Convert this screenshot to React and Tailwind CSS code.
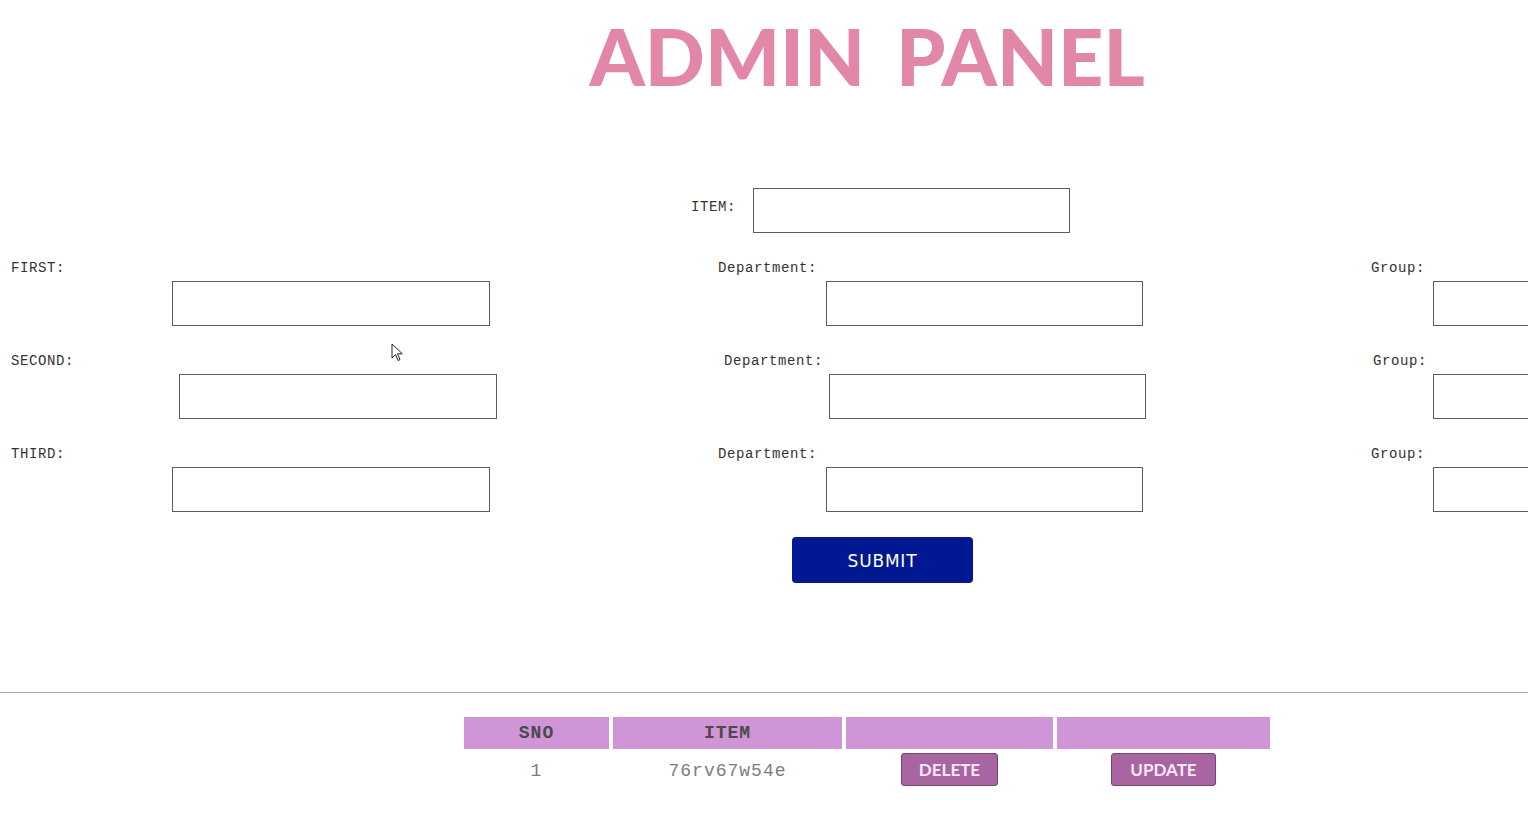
import React, { useState } from "react";

const labelCls =
  "block font-['Liberation_Mono',monospace] text-[14px] leading-4 tracking-[0.6px] text-[#333]";
const inputCls =
  "block mt-[5px] h-[45px] border border-[#5c5c5c] bg-white outline-none px-2";

const rows = [
  { name: "FIRST", first: [11, 172], dept: [11, 119], group: [11, 73] },
  { name: "SECOND", first: [11, 179], dept: [17, 122], group: [13, 73] },
  { name: "THIRD", first: [11, 172], dept: [11, 119], group: [11, 73] },
];

const pl = { 11: "pl-[11px]", 13: "pl-[13px]", 17: "pl-[17px]" };
const ml = {
  172: "ml-[172px]",
  179: "ml-[179px]",
  119: "ml-[119px]",
  122: "ml-[122px]",
  73: "ml-[73px]",
};

const Field = ({ label, offsets, width, inputWidth }) => (
  <div className={`${width} shrink-0`}>
    <label className={`${labelCls} ${pl[offsets[0]]}`}>{label}</label>
    <input type="text" className={`${inputCls} ${inputWidth} ${ml[offsets[1]]}`} />
  </div>
);

const Cursor = () => (
  <svg
    className="absolute left-[391px] top-[343px]"
    width="13"
    height="20"
    viewBox="0 0 13 20"
  >
    <path
      d="M1 1 L1 15 L4.5 11.5 L7 17.5 L9 16.6 L6.6 10.8 L11.3 10.8 Z"
      fill="white"
      stroke="#222"
      strokeWidth="1"
      strokeLinejoin="round"
    />
  </svg>
);

const App = () => {
  const [items] = useState([{ sno: 1, item: "76rv67w54e" }]);

  return (
    <div className="relative w-[1528px] min-h-[831px] overflow-hidden bg-white">
      <h1 className="pt-[16px] pl-[206px] text-center font-['Lato',sans-serif] font-black text-[79px] leading-none text-[#e387a8] [word-spacing:12px]">
        ADMIN PANEL
      </h1>

      <form className="mt-[93px]">
        <div className="flex items-center pl-[691px]">
          <label className={`${labelCls} mb-[7px]`}>ITEM:</label>
          <input type="text" className="ml-[17px] w-[317px] h-[45px] border border-[#5c5c5c] outline-none px-2" />
        </div>

        <div className="mt-[27px] flex flex-col gap-[27px]">
          {rows.map((r) => (
            <div key={r.name} className="flex">
              <Field label={`${r.name}:`} offsets={r.first} width="w-[707px]" inputWidth="w-[318px]" />
              <Field label="Department:" offsets={r.dept} width="w-[653px]" inputWidth="w-[317px]" />
              <Field label="Group:" offsets={r.group} width="w-[400px]" inputWidth="w-[318px]" />
            </div>
          ))}
        </div>

        <button
          type="submit"
          className="mt-[25px] ml-[792px] w-[181px] h-[46px] pt-[3px] rounded-[4px] bg-[#001891] text-white font-['DejaVu_Sans',sans-serif] text-[17px] tracking-[0.8px]"
        >
          SUBMIT
        </button>
      </form>

      <hr className="mt-[109px] border-0 border-t border-[#a8a8a8]" />

      <table className="mt-[20px] ml-[460px] border-separate border-spacing-[4px] font-['Liberation_Mono',monospace] text-[18px] tracking-[1px]">
        <thead>
          <tr className="bg-[#cf95d7] text-[#4a4a4a] h-[32px]">
            <th className="w-[145px] pt-[1px] font-bold">SNO</th>
            <th className="w-[229px] pt-[1px] font-bold">ITEM</th>
            <th className="w-[207px]"></th>
            <th className="w-[213px]"></th>
          </tr>
        </thead>
        <tbody>
          {items.map((it) => (
            <tr key={it.sno} className="text-center text-[#7d7d7d]">
              <td className="pt-[3px]">{it.sno}</td>
              <td className="pt-[3px]">{it.item}</td>
              <td>
                <button className="w-[97px] h-[33px] rounded-[3px] border border-[#6e4a6c] bg-[#a964a2] text-[#f6e9f5] font-['Lato',sans-serif] font-bold text-[17px] tracking-normal">
                  DELETE
                </button>
              </td>
              <td>
                <button className="w-[105px] h-[33px] rounded-[3px] border border-[#6e4a6c] bg-[#a964a2] text-[#f6e9f5] font-['Lato',sans-serif] font-bold text-[17px] tracking-normal">
                  UPDATE
                </button>
              </td>
            </tr>
          ))}
        </tbody>
      </table>

      <Cursor />
    </div>
  );
};

export default App;
